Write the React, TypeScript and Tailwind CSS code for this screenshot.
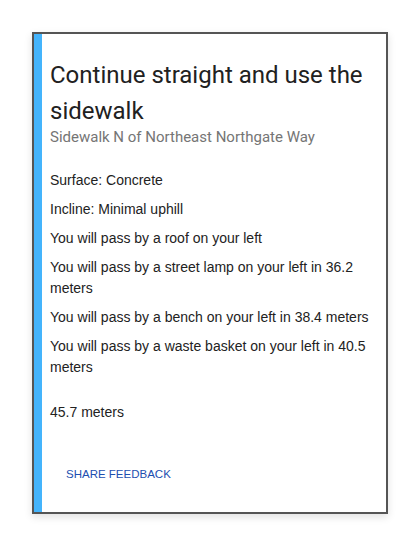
const details = [
  "Surface: Concrete",
  "Incline: Minimal uphill",
  "You will pass by a roof on your left",
  "You will pass by a street lamp on your left in 36.2 meters",
  "You will pass by a bench on your left in 38.4 meters",
  "You will pass by a waste basket on your left in 40.5 meters",
];

export default function App() {
  return (
    <div className="min-h-[546px] w-[420px] bg-white p-8">
      <div className="flex w-[356px] h-[482px] border-2 border-[#555555] bg-white shadow-[0_3px_8px_rgba(0,0,0,0.12)]">
        <div className="w-2 shrink-0 bg-[#44b4fc]" />
        <div className="flex flex-1 flex-col pl-2 pr-4 pt-[23px]">
          <h2 className="font-['Roboto',sans-serif] text-[24px] leading-[36px] text-[#212121]">
            Continue straight and use the sidewalk
          </h2>
          <p className="font-['Roboto',sans-serif] text-[15px] leading-[16px] text-[#757575]">
            Sidewalk N of Northeast Northgate Way
          </p>
          <div className="mt-[25px] font-['Liberation_Sans',sans-serif] text-[14px] leading-[21px] text-[#222222]">
            {details.map((line) => (
              <p key={line} className="mb-2">
                {line}
              </p>
            ))}
            <p className="mt-6">45.7 meters</p>
          </div>
          <div className="mt-auto mb-[19px]">
            <button className="h-9 px-4 font-['Liberation_Sans',sans-serif] text-[11.5px] uppercase text-[#1d4fb0]">
              Share feedback
            </button>
          </div>
        </div>
      </div>
    </div>
  );
}
